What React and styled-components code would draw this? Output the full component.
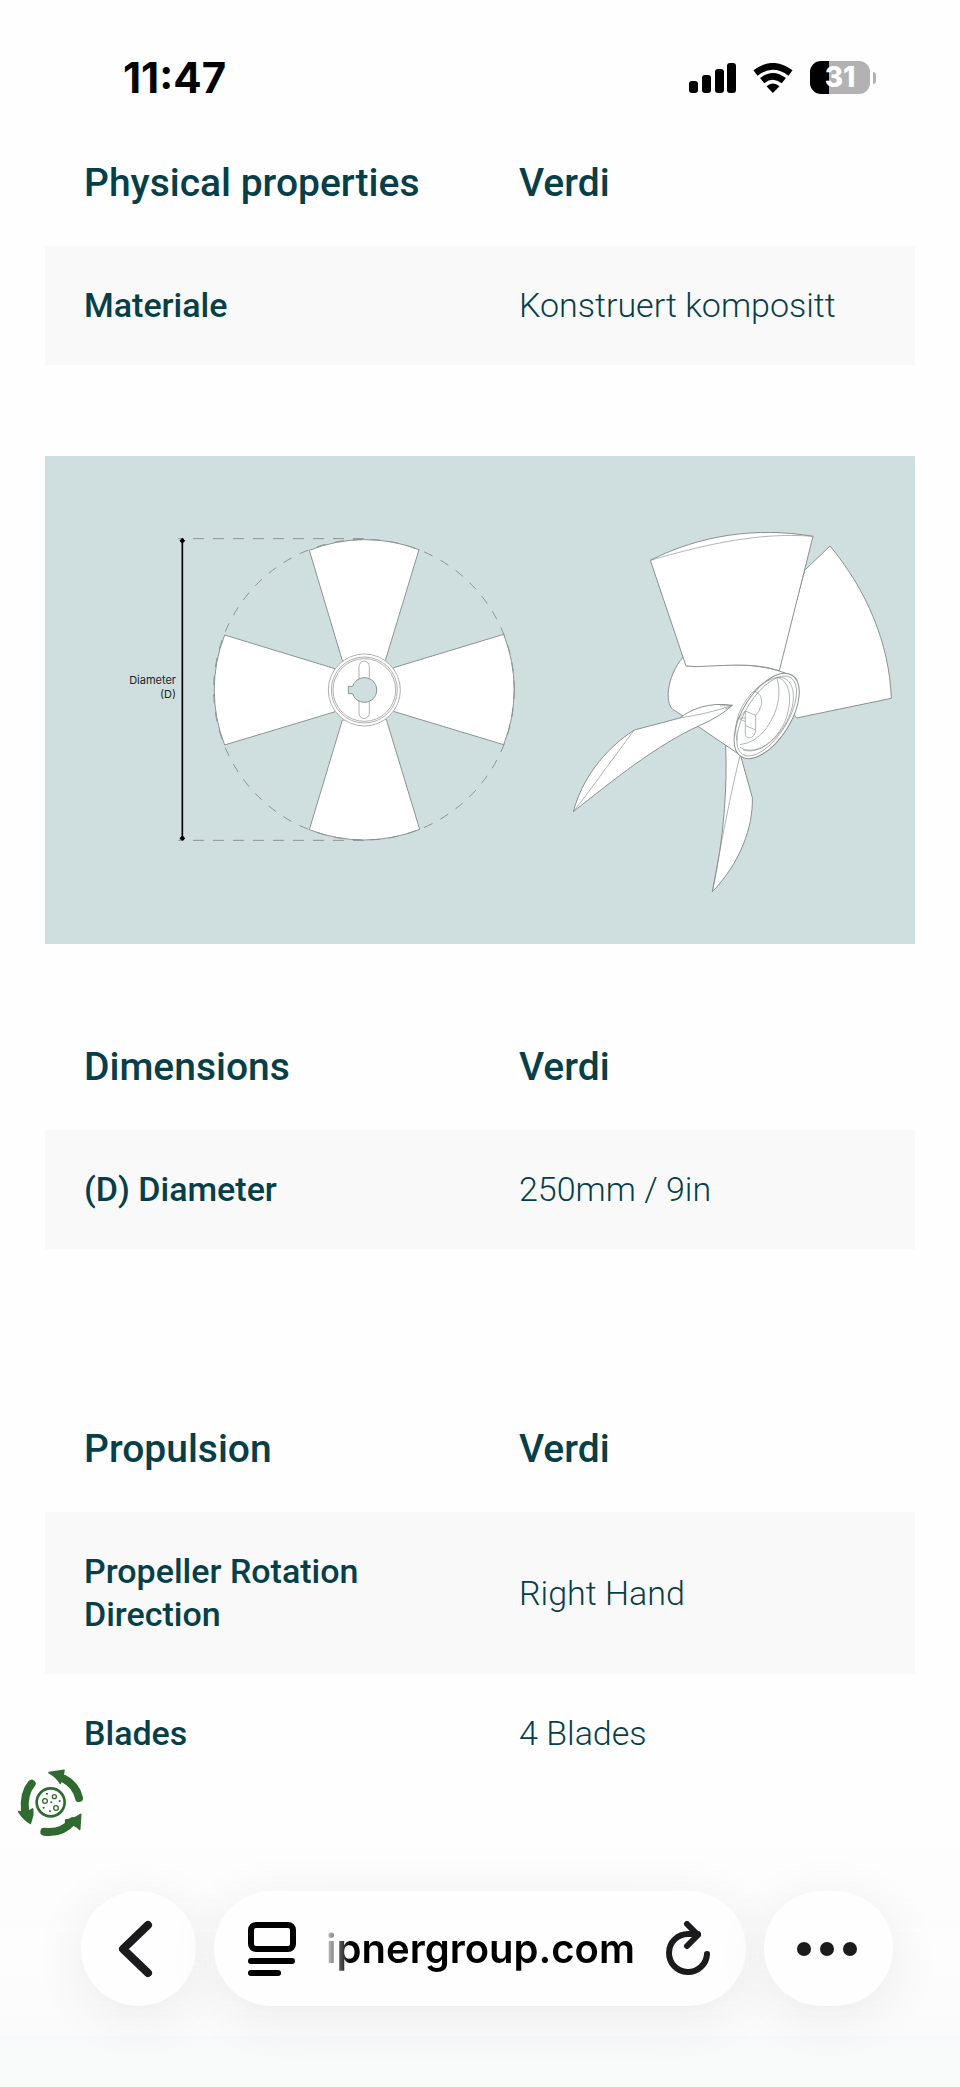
import React from "react";
import styled, { createGlobalStyle } from "styled-components";

const GlobalStyle = createGlobalStyle`
  *, *::before, *::after { box-sizing: border-box; }
  body {
    margin: 0;
    background: #fefefe;
    color: #063f48;
    font-family: Roboto, "Noto Sans", sans-serif;
  }
`;

const Page = styled.div`
  min-height: 100vh;
  padding-bottom: 264px;
`;

const StatusBar = styled.header`
  display: flex;
  align-items: center;
  justify-content: space-between;
  height: 121px;
  padding: 34px 84px 0 123px;
  color: #000;
  font-family: Inter, "Liberation Sans", sans-serif;
`;

const Clock = styled.time`
  font-size: 42px;
  line-height: 48px;
  font-weight: 700;
`;

const StatusIcons = styled.div`
  display: flex;
  align-items: center;
  gap: 17px;
`;

const BatteryWrap = styled.div`
  display: flex;
  align-items: center;
  gap: 3px;
`;

const BatteryBody = styled.div`
  display: flex;
  align-items: center;
  justify-content: center;
  width: 60px;
  height: 33px;
  border-radius: 11px;
  background: linear-gradient(90deg, #000 0 31%, #b2b2b2 31%);
  color: #fff;
  font-size: 28px;
  line-height: 33px;
  font-weight: 800;
`;

const BatteryCap = styled.div`
  width: 3px;
  height: 12px;
  border-radius: 0 4px 4px 0;
  background: #b2b2b2;
`;

const Content = styled.main`
  padding: 0 45px;
`;

const SpecTable = styled.table`
  width: 100%;
  margin-top: ${(p) => p.$gap || 0}px;
  border-collapse: collapse;
  table-layout: fixed;
`;

const HeadCell = styled.th`
  padding: 38px 39px 39px;
  font-size: 39px;
  line-height: 48px;
  font-weight: 500;
  text-align: left;
`;

const SpecRow = styled.tr`
  &:nth-child(odd) { background: #f9f9f9; }
`;

const NameCell = styled.th`
  padding: 38px 39px;
  font-size: 34px;
  line-height: 43px;
  font-weight: 500;
  text-align: left;
`;

const ValueCell = styled.td`
  padding: 38px 39px;
  font-size: 34px;
  line-height: 43px;
  font-weight: 300;
`;

const Figure = styled.figure`
  margin: 91px 0 0;
  background: #cfdfdf;

  svg { display: block; width: 100%; height: auto; }
`;

const EcoBadge = styled.button`
  position: fixed;
  left: 17px;
  bottom: 250px;
  z-index: 2;
  padding: 0;
  border: 0;
  background: none;

  svg { display: block; }
`;

const BrowserBar = styled.nav`
  position: fixed;
  left: 0;
  right: 0;
  bottom: 0;
  display: flex;
  gap: 18px;
  padding: 71px 67px 81px 81px;
  background: linear-gradient(180deg, rgba(253, 253, 253, 0), #fbfbfb 81%, #f8f9fa 81%, #f9fbfa);
`;

const Pill = styled.div`
  display: flex;
  align-items: center;
  height: 115px;
  border-radius: 58px;
  background: #fefefe;
  box-shadow: 0 10px 56px rgba(0, 0, 0, 0.07);
`;

const RoundButton = styled(Pill).attrs({ as: "button", type: "button" })`
  flex: none;
  justify-content: center;
  width: ${(p) => p.$width}px;
  padding: 0;
  border: 0;
`;

const AddressPill = styled(Pill)`
  flex: 1;
  min-width: 0;
  justify-content: space-between;
  padding: 0 35px 0 34px;
`;

const IconButton = styled.button`
  flex: none;
  padding: 0;
  border: 0;
  background: none;

  svg { display: block; }
`;

const Address = styled.button`
  padding: 0;
  border: 0;
  background: none;
  color: #000;
  font-family: Inter, "Liberation Sans", sans-serif;
  font-size: 40px;
  line-height: 48px;
  font-weight: 600;
  white-space: nowrap;
  mask-image: linear-gradient(90deg, rgba(0, 0, 0, 0.2), #000 24px);
`;

function SignalIcon() {
  return (
    <svg width="47" height="30" viewBox="0 0 47 30" aria-label="Signal">
      <rect x="0" y="18" width="9" height="12" rx="3" />
      <rect x="13" y="12" width="9" height="18" rx="3" />
      <rect x="26" y="6" width="9" height="24" rx="3" />
      <rect x="38" y="0" width="9" height="30" rx="3" />
    </svg>
  );
}

function WifiIcon() {
  return (
    <svg width="40" height="30" viewBox="248 68 119 90" fill="none" stroke="#000" strokeWidth="20" aria-label="Wi-Fi">
      <path d="M255 98 Q307 58 360 98" />
      <path d="M275 121 Q307 95 340 121" />
      <path d="M288 138 Q307 121 327 138 L307 158 Z" fill="#000" stroke="none" />
    </svg>
  );
}

function BackIcon() {
  return (
    <svg width="42" height="58" viewBox="0 0 42 58" fill="none" stroke="#1b1b1d" strokeWidth="8" strokeLinecap="round" strokeLinejoin="round">
      <path d="M30 5 L5 29 L30 53" />
    </svg>
  );
}

function PageMenuIcon() {
  return (
    <svg width="48" height="56" viewBox="0 0 48 56" fill="none" stroke="#000" strokeWidth="6" strokeLinecap="round">
      <rect x="3" y="4" width="42" height="24" rx="5" />
      <path d="M3 40 H44 M3 52 H30" />
    </svg>
  );
}

function ReloadIcon() {
  return (
    <svg width="46" height="56" viewBox="0 0 46 56" fill="none" stroke="#1b1b1d" strokeWidth="6" strokeLinecap="round" strokeLinejoin="round">
      <path d="M42 33 A19 19 0 1 1 23 13 H33" />
      <path d="M22 3 L33 14 L22 25" />
    </svg>
  );
}

function MoreIcon() {
  return (
    <svg width="64" height="14" viewBox="0 0 64 14" fill="#1b1b1d">
      <circle cx="7" cy="7" r="7" />
      <circle cx="30" cy="7" r="7" />
      <circle cx="53" cy="7" r="7" />
    </svg>
  );
}

function RecycleIcon() {
  return (
    <svg width="67" height="69" viewBox="50 84 201 207" fill="none" stroke="#2f6b2f" strokeLinecap="round" strokeLinejoin="round">
      <g strokeWidth="24">
        <path d="M236 174 Q227 135 190 116" />
        <path d="M94 131 Q69 160 74 212" />
        <path d="M132 275 Q184 282 216 244" />
      </g>
      <g fill="#2f6b2f" strokeWidth="5">
        <path d="M146 98 L191 91 L188 106 L180 130 Q168 109 146 98 Z" />
        <path d="M55 215 Q80 221 97 207 L97 226 L90 250 Q70 239 55 215 Z" />
        <path d="M241 223 L238 268 Q226 254 196 249 L196 240 Q222 237 241 223 Z" />
      </g>
      <circle cx="151" cy="187" r="42" strokeWidth="8" />
      <g strokeWidth="4">
        <circle cx="134" cy="183" r="7" />
        <circle cx="162" cy="170" r="6" />
        <circle cx="167" cy="204" r="7" />
      </g>
      <g fill="#2f6b2f" stroke="none">
        <circle cx="140" cy="161" r="3" />
        <circle cx="178" cy="183" r="3" />
        <circle cx="153" cy="187" r="3" />
        <circle cx="130" cy="203" r="3" />
        <circle cx="149" cy="214" r="3" />
      </g>
    </svg>
  );
}

/* Both views are drawn at three times their size and scaled into the panel. */
function PropellerDrawing() {
  return (
    <svg viewBox="0 0 870 488" role="img" aria-label="Propeller front and perspective view">
      <g transform="translate(-5 -6) scale(0.33333)" fill="none" stroke="#8b9393" strokeWidth="3">
        <path d="M415 266 H975 M415 1171 H975" strokeDasharray="33 27" strokeDashoffset="16" />
        <g fill="#fff">
          <path d="M907 632 L808 301 A451 451 0 0 1 1137 299 L1036 632 Z" />
          <path d="M885 656 L554 555 A451 451 0 0 0 554 885 L886 785 Z" />
          <path d="M1061 653 L1391 553 A451 451 0 0 1 1391 884 L1060 784 Z" />
          <path d="M907 810 L808 1139 A451 451 0 0 0 1139 1138 L1039 808 Z" />
        </g>
        <circle cx="972" cy="719" r="451" strokeDasharray="28 27" />
        <g fill="#fff" stroke="#b0b0b0">
          <circle cx="973" cy="720" r="108" />
          <circle cx="973" cy="720" r="99" />
          <circle cx="973" cy="720" r="94" />
          <path d="M957 690 V650 a15 16 0 0 1 31 0 V690 M957 750 V789 a15 16 0 0 0 31 0 V750" />
        </g>
        <path d="M938 709 H925 V731 H938 A37 37 0 1 0 938 709 Z" fill="#cfdfdf" />
        <path d="M427 272 V1166" stroke="#000" strokeWidth="5" />
        <path d="M420 272 L427 265 L434 272 L430 277 H424 Z M420 1166 L427 1171 L434 1166 L430 1160 H424 Z" fill="#000" stroke="#000" />
      </g>
      <g fill="#1c2424" fontFamily='Inter, "Liberation Sans", sans-serif' fontSize="11" textAnchor="end">
        <text x="131" y="228">Diameter</text>
        <text x="131" y="242">(D)</text>
      </g>
      <g transform="translate(495 44) scale(0.33333)" fill="none" stroke="#8b9090" strokeWidth="3" strokeLinejoin="round">
        <g fill="#fff">
          <path d="M870 138 C980 270 1048 430 1054 595 L770 654 L700 560 L794 211 Z" />
          <path d="M557 735 C562 860 553 1010 517 1175 C600 1090 640 980 637 893 L600 760 Z" />
          <path d="M430 470 C378 530 372 620 405 632 L600 765 L743 522 C650 485 560 495 440 498 Z" />
          <path d="M331 181 C480 105 650 80 819 109 L718 512 C640 487 560 497 510 498 Q470 502 438 498 Z" />
          <path d="M577 616 C510 605 450 628 420 654 L283 690 C190 750 125 840 100 935 C220 840 350 735 478 677 Q540 650 577 616 Z" />
          <ellipse cx="680" cy="648" rx="72" ry="144" transform="rotate(32 680 648)" />
        </g>
        <g strokeWidth="2">
          <path d="M331 181 C480 138 650 95 819 109" />
          <path d="M420 654 Q510 640 577 616 M540 618 L577 616 L555 628" />
          <path d="M283 690 L190 815 Q155 865 100 935" />
          <path d="M600 766 C570 890 545 1020 517 1175" />
          <ellipse cx="680" cy="648" rx="63" ry="136" transform="rotate(32 680 648)" />
          <path d="M592 720 C570 660 625 555 710 532 C750 528 768 565 757 620 C735 710 650 775 600 742" />
          <path d="M712 532 C758 545 757 620 730 675 C700 730 650 765 608 749" />
          <path d="M710 532 C728 590 708 645 675 690 Q645 728 600 734" />
          <path d="M641 575 C662 577 667 595 664 615 Q658 638 646 646" />
          <path d="M616 633 L647 646 V690 C646 712 625 722 616 706 Z M616 633 L595 655 L616 665 M616 654 L600 654 M616 676 L647 690" />
        </g>
      </g>
    </svg>
  );
}

function SpecSection({ title, rows, gap }) {
  return (
    <SpecTable $gap={gap}>
      <thead>
        <tr>
          <HeadCell scope="col">{title}</HeadCell>
          <HeadCell scope="col">Verdi</HeadCell>
        </tr>
      </thead>
      <tbody>
        {rows.map(([name, value]) => (
          <SpecRow key={name}>
            <NameCell scope="row">{name}</NameCell>
            <ValueCell>{value}</ValueCell>
          </SpecRow>
        ))}
      </tbody>
    </SpecTable>
  );
}

export default function App() {
  return (
    <Page>
      <GlobalStyle />
      <StatusBar>
        <Clock>11:47</Clock>
        <StatusIcons>
          <SignalIcon />
          <WifiIcon />
          <BatteryWrap>
            <BatteryBody>31</BatteryBody>
            <BatteryCap />
          </BatteryWrap>
        </StatusIcons>
      </StatusBar>
      <Content>
        <SpecSection title="Physical properties" rows={[["Materiale", "Konstruert kompositt"]]} />
        <Figure>
          <PropellerDrawing />
        </Figure>
        <SpecSection title="Dimensions" gap={61} rows={[["(D) Diameter", "250mm / 9in"]]} />
        <SpecSection
          title="Propulsion"
          gap={138}
          rows={[
            ["Propeller Rotation Direction", "Right Hand"],
            ["Blades", "4 Blades"],
          ]}
        />
      </Content>
      <EcoBadge type="button" aria-label="Cookie settings">
        <RecycleIcon />
      </EcoBadge>
      <BrowserBar>
        <RoundButton $width={115} aria-label="Back">
          <BackIcon />
        </RoundButton>
        <AddressPill>
          <IconButton type="button" aria-label="Page menu">
            <PageMenuIcon />
          </IconButton>
          <Address type="button">ipnergroup.com</Address>
          <IconButton type="button" aria-label="Reload">
            <ReloadIcon />
          </IconButton>
        </AddressPill>
        <RoundButton $width={129} aria-label="More">
          <MoreIcon />
        </RoundButton>
      </BrowserBar>
    </Page>
  );
}
